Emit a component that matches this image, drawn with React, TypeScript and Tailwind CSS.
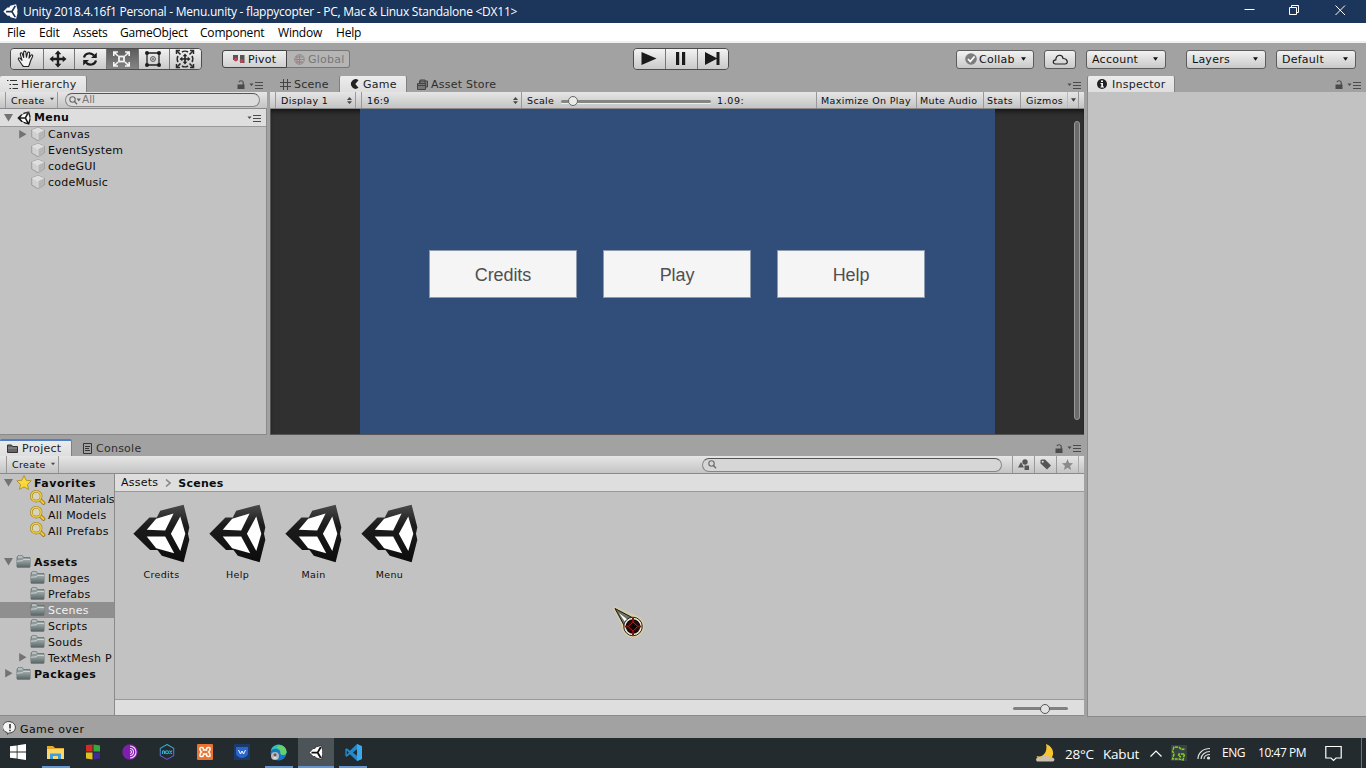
import React from "react";

type Kids = { children?: React.ReactNode; className?: string };

const UI = "font-['DejaVu_Sans',sans-serif]";
const SYS = "font-['Open_Sans','Noto_Sans',sans-serif]";
const BAR = "bg-linear-to-b from-[#e6e6e6] to-[#c4c4c4] border-b border-[#8a8a8a]";
const SMALL = "text-[9.5px] tracking-[0.35px] whitespace-nowrap";
const BTN = "bg-linear-to-b from-[#f2f2f2] to-[#c9c9c9] border border-[#5c5c5c]";

function Label({ children, className = "" }: Kids) {
  return <span className={`pt-[2px] ${className}`}>{children}</span>;
}

function UnityCube({ size, light = false }: { size: number; light?: boolean }) {
  return (
    <svg width={size} height={size} viewBox="0 0 172 176" className="shrink-0">
      <defs>
        <linearGradient id="cube" x1="0" y1="0" x2="0" y2="1">
          <stop offset="0" stopColor="#4a4a4a" />
          <stop offset="0.35" stopColor="#1c1c1c" />
          <stop offset="1" stopColor="#0c0c0c" />
        </linearGradient>
      </defs>
      <path
        d="M2 89 50 40H72L82 20 152 2 169 69 165 89 169 107 152 174 87 154 74 137H52Z"
        fill={light ? "#fff" : "url(#cube)"}
      />
      {light ? (
        <path d="M34 89H102L142 22M102 89 142 154" fill="none" stroke="#1b355b" strokeWidth="20" />
      ) : (
        <path d="M42 77 70 44 122 28 97 79ZM42 97H97L124 147 70 132ZM142 37 157 89 142 140 114 89Z" fill="#fff" />
      )}
    </svg>
  );
}

function Caret({ className = "" }: { className?: string }) {
  return (
    <svg width="6" height="4" viewBox="0 0 6 4" className={`shrink-0 ${className}`}>
      <path d="M0 0H6L3 4Z" fill="currentColor" />
    </svg>
  );
}

function UpDown() {
  return (
    <svg width="5" height="7" viewBox="0 0 5 7" className="shrink-0">
      <path d="M0 3 2.5 0 5 3ZM0 4.300H5L2.500 7Z" fill="#444" />
    </svg>
  );
}

function PanelMenu() {
  return (
    <svg width="14" height="8" viewBox="0 0 14 8" className="shrink-0">
      <path d="M0.500 2.500H4.500L2.500 5Z" fill="#4a4a4a" />
      <path d="M6 1.500H14M6 4.500H14M6 7.500H14" stroke="#4a4a4a" strokeWidth="1" />
    </svg>
  );
}

function Lock() {
  return (
    <svg width="8" height="9" viewBox="0 0 8 9" className="shrink-0">
      <path d="M0.500 4.500H7.500V9H0.500Z" fill="#4a4a4a" />
      <path d="M2 2.200C2.500 0.200 6.200 0.200 6.200 2.500V5" fill="none" stroke="#4a4a4a" strokeWidth="1.200" />
    </svg>
  );
}

function Fold({ open = false }: { open?: boolean }) {
  return (
    <svg width="9" height="9" viewBox="0 0 9 9" className="-mt-px shrink-0">
      <path d={open ? "M0 1H9L4.500 8.500Z" : "M1.200 0V8.500L8.500 4.200Z"} fill="#737373" />
    </svg>
  );
}

function PrefabCube() {
  return (
    <svg width="14" height="16" viewBox="0 0 14 16" className="-mt-[2px] shrink-0">
      <path d="M7 1.500 13.300 4V11L7 14.700 0.700 11V4Z" fill="#d0d0d0" stroke="#8f8f8f" strokeWidth="0.800" />
      <path d="M7 1.500 13 4 7 7 1 4Z" fill="#dedede" />
      <path d="M7 7 13 4V11L7 14.500Z" fill="#b6b6b6" />
      <path d="M1 4 7 7 13 4M7 7V14" stroke="#e8e8e8" strokeWidth="0.600" fill="none" />
    </svg>
  );
}

function Folder() {
  return (
    <svg width="15" height="13" viewBox="0 0 15 13" className="-mt-px shrink-0">
      <defs>
        <linearGradient id="fold" x1="0" y1="0" x2="0" y2="1">
          <stop offset="0" stopColor="#a5afaf" />
          <stop offset="1" stopColor="#566365" />
        </linearGradient>
      </defs>
      <path d="M1 12V2.500L2 0.800H6.500L7.500 2.500H14V12Z" fill="#8f9a9b" stroke="#5c6768" strokeWidth="0.700" />
      <path d="M2 2H6.500" stroke="#e0e6e6" />
      <path d="M0.500 6 6 5.500 7.500 4H14.500L14 12.500H1Z" fill="url(#fold)" />
      <path d="M1 6.200 6 5.800 7.500 4.400H14" stroke="#d9e0e0" strokeWidth="0.800" fill="none" />
    </svg>
  );
}

function YellowLens() {
  return (
    <svg width="17" height="16" viewBox="0 0 17 16" className="shrink-0">
      <path d="M11 9.500 14.500 13" stroke="#8b6e16" strokeWidth="3.600" strokeLinecap="round" />
      <path d="M11 9.500 14.500 13" stroke="#f2c92e" strokeWidth="2.200" strokeLinecap="round" />
      <circle cx="7.200" cy="6.200" r="4.900" fill="#d9d5bd" stroke="#9a7d25" strokeWidth="2.600" />
      <circle cx="7.200" cy="6.200" r="4.900" fill="none" stroke="#f0cf45" strokeWidth="1.500" />
    </svg>
  );
}

function Lens({ caret = false }: { caret?: boolean }) {
  return (
    <svg width={caret ? 13 : 9} height="9" viewBox={caret ? "0 0 13 9" : "0 0 9 9"} className="shrink-0">
      <circle cx="3.500" cy="3.500" r="2.700" fill="none" stroke="#6a6a6a" strokeWidth="1.100" />
      <path d="M5.500 5.500 8 8.300" stroke="#6a6a6a" strokeWidth="1.400" />
      {caret && <path d="M7.500 2.500H12L9.800 5.500Z" fill="#6a6a6a" />}
    </svg>
  );
}

const toolIcons: React.ReactNode[] = [
  <svg key="hand" width="18" height="18" viewBox="0 0 18 18" fill="#f4f4f4" stroke="#222" strokeWidth="1.100" strokeLinejoin="round">
    <path d="M5.500 15.500 1.500 9.500C0.800 8.200 2.400 7.300 3.500 8.600L5 10.300 3.300 4.300C3 2.700 4.900 2.200 5.300 3.700L6.700 7.500 6.600 2.300C6.700 0.700 8.700 0.700 8.900 2.300L9.400 7.300 10.600 2.900C11.100 1.500 12.800 2 12.700 3.500L12 8.200 13.900 5.300C14.800 4.200 16.200 5.200 15.600 6.500L13.500 11C13 13 12.500 15 11.500 16.500H6.500Z" />
  </svg>,
  <svg key="move" width="18" height="18" viewBox="0 0 18 18" fill="#1d1d1d">
    <path d="M9 0.500 12.300 4.300H10.200V7.800H13.700V5.700L17.500 9 13.700 12.300V10.200H10.200V13.700H12.300L9 17.500 5.700 13.700H7.800V10.200H4.300V12.300L0.500 9 4.300 5.700V7.800H7.800V4.300H5.700Z" />
  </svg>,
  <svg key="rot" width="18" height="18" viewBox="0 0 18 18" fill="none" stroke="#1d1d1d" strokeWidth="2.200">
    <path d="M3 7.500C4 3 10 2 13 5.500M15 10.500C14 15 8 16 5 12.500" />
    <path d="M15.800 2.500V8H10ZM2.200 15.500V10H8Z" fill="#1d1d1d" stroke="none" />
  </svg>,
  <svg key="scale" width="19" height="18" viewBox="0 0 19 18" fill="none" stroke="#f4f4f4" strokeWidth="1.600">
    <path d="M1.800 6V2H6M2 2 6 6M13 2H17.200V6M17 2 13 6M1.800 12V16H6M2 16 6 12M13 16H17.200V12M17 16 13 12" />
    <rect x="7" y="6.500" width="5" height="5" fill="#777" strokeWidth="1.800" />
  </svg>,
  <svg key="rect" width="18" height="18" viewBox="0 0 18 18" fill="#1d1d1d">
    <path d="M3 3H15V15H3Z" fill="none" stroke="#222" strokeWidth="1.300" />
    <circle cx="3" cy="3" r="2" /><circle cx="15" cy="3" r="2" /><circle cx="3" cy="15" r="2" /><circle cx="15" cy="15" r="2" />
    <circle cx="9" cy="9" r="2.400" fill="none" stroke="#444" strokeWidth="0.900" /><circle cx="9" cy="9" r="0.800" />
  </svg>,
  <svg key="multi" width="20" height="20" viewBox="0 0 20 20" fill="none" stroke="#2a2a2a">
    <path d="M1.500 5V1.500H5M15 1.500H18.500V5M1.500 15V18.500H5M15 18.500H18.500V15" strokeWidth="1.500" />
    <path d="M7 3C8.500 2 11.500 2 13 3M17 7C18 8.500 18 11.500 17 13M13 17C11.500 18 8.500 18 7 17M3 13C2 11.500 2 8.500 3 7M2 2 5.500 5.500M18 2 14.500 5.500M2 18 5.500 14.500M18 18 14.500 14.500" strokeWidth="1.600" />
    <path d="M10 4.500 12.300 7.300H10.800V9.200H12.700V7.700L15.500 10 12.700 12.300V10.800H10.800V12.700H12.300L10 15.500 7.700 12.700H9.200V10.800H7.300V12.300L4.500 10 7.300 7.700V9.200H9.200V7.300H7.700Z" fill="#222" stroke="none" />
  </svg>,
];

function DropButton({ label, className = "" }: { label: string; className?: string }) {
  return (
    <div className={`flex h-[19px] w-20 items-center justify-between rounded-[3px] pl-[5px] pr-[7px] text-[#111] ${BTN} ${className}`}>
      <Label>{label}</Label>
      <Caret className="w-[5px]" />
    </div>
  );
}

function TitleBar() {
  return (
    <div className={`flex h-[23px] items-center bg-[#1b355b] text-white ${SYS}`}>
      <div className="w-[23px] pl-[3px]"><UnityCube size={15} light /></div>
      <span className="grow pt-px text-[12px] tracking-[-0.245px] whitespace-nowrap">
        Unity 2018.4.16f1 Personal - Menu.unity - flappycopter - PC, Mac &amp; Linux Standalone &lt;DX11&gt;
      </span>
      <svg width="102" height="12" viewBox="0 0 102 12" fill="none" stroke="#fff" className="mr-[20px] -mt-[3px]">
        <path d="M0.500 5.500H10.500M45.500 3.500H52.500V10.500H45.500ZM47.500 3V1.500H54.500V8.500H53M91.500 1.500 101 11M101 1.500 91.500 11" />
      </svg>
    </div>
  );
}

function MenuBar() {
  const items: [string, string][] = [
    ["File", "w-8"], ["Edit", "w-[34px]"], ["Assets", "w-[47px]"], ["GameObject", "w-20"],
    ["Component", "w-[78px]"], ["Window", "w-[58px]"], ["Help", "w-10"],
  ];
  return (
    <div className={`flex h-5 items-center border-b-2 border-[#f0f0f0] bg-white pt-[2px] pl-[7px] text-[12px] tracking-[-0.200px] text-black ${SYS}`}>
      {items.map(([t, w]) => <span key={t} className={w}>{t}</span>)}
    </div>
  );
}

function Toolbar() {
  return (
    <div className="flex h-[33px] items-center pl-[10px] text-[11px] tracking-[0.250px]">
      <div className="-mt-[2px] flex h-[22px] w-[192px] overflow-hidden rounded-[4px] border border-[#4c4c4c]">
        {toolIcons.map((icon, i) => (
          <div key={i} className={`flex w-8 items-center justify-center pr-[2px] ${i ? "border-l border-[#777]" : ""} ${i === 3 ? "bg-linear-to-b from-[#5c5c5c] to-[#858585]" : "bg-linear-to-b from-[#f2f2f2] to-[#c9c9c9]"}`}>{icon}</div>
        ))}
      </div>
      <div className="-mt-px ml-5 flex h-[18px] w-[65px] items-center rounded-l-[3px] border border-[#444] bg-linear-to-b from-[#efefef] to-[#d0d0d0] pl-[10px] text-[#111]">
        <svg width="12" height="10" viewBox="0 0 12 10" className="mr-[3px]">
          <path d="M0 1H5V6H0ZM7 1H11.500V9H7Z" fill="#555" /><circle cx="2.800" cy="5.500" r="2" fill="#b64956" /><circle cx="8.600" cy="7" r="2" fill="#b64956" />
        </svg>
        <Label>Pivot</Label>
      </div>
      <div className="-mt-px flex h-[18px] w-[63px] items-center rounded-r-[3px] border border-l-0 border-[#777] bg-[#b5b5b5] pl-[7px] text-[#777]">
        <svg width="11" height="11" viewBox="0 0 11 11" className="mr-[3px]" fill="none" stroke="#888">
          <circle cx="5.500" cy="5.500" r="4.800" /><path d="M5.500 1V10M1 5.500H10M2 3H9M2 8H9" /><path d="M3 1.500V8H8" stroke="#b77" />
        </svg>
        <Label>Global</Label>
      </div>
      <div className="-mt-[2px] ml-[283px] flex h-[22px] w-[96px] overflow-hidden rounded-[4px] border border-[#4c4c4c]">
        {["M0.500 1 15.500 7.500 0.500 14Z", "M4 1H7.200V14H4ZM10 1H13.200V14H10Z", "M1 1 12.500 7 12.500 1H15.500V14H12.500V8L1 14Z"].map((d, i) => (
          <div key={i} className={`flex w-8 items-center justify-center bg-linear-to-b from-[#f2f2f2] to-[#c9c9c9] pr-[2px] ${i ? "border-l border-[#777]" : ""}`}>
            <svg width="16" height="15" viewBox="0 0 16 15"><path d={d} fill="#1a1a1a" /></svg>
          </div>
        ))}
      </div>
      <div className={`-mt-px ml-[227px] flex h-[19px] w-[78px] items-center rounded-[3px] pl-2 text-[#111] ${BTN}`}>
        <svg width="12" height="12" viewBox="0 0 12 12"><circle cx="6" cy="6" r="5.800" fill="#7d7d7d" /><path d="M3 6 5.300 8.500 9.500 3.500" stroke="#fff" strokeWidth="1.800" fill="none" /></svg>
        <Label className="ml-[2px] w-[42px]">Collab</Label>
        <Caret className="w-[5px]" />
      </div>
      <div className={`-mt-px ml-[10px] flex h-[19px] w-8 items-center justify-center rounded-[3px] ${BTN}`}>
        <svg width="16" height="11" viewBox="0 0 16 11" fill="none" stroke="#222" strokeWidth="1.200"><path d="M3.500 10C0.500 10 0.500 6 3.800 5.800 4 0 10.500 0 11 4.500 16 4.500 16.500 10 13 10Z" /></svg>
      </div>
      <DropButton label="Account" className="-mt-px ml-[10px]" />
      <DropButton label="Layers" className="-mt-px ml-5" />
      <DropButton label="Default" className="-mt-px ml-[10px]" />
    </div>
  );
}

function Tab({ active = false, focus = false, className = "", icon, children }: Kids & { active?: boolean; focus?: boolean; icon: React.ReactNode }) {
  return (
    <div className={`flex h-4 items-center whitespace-nowrap text-[11px] tracking-[0.250px] ${active ? "rounded-t-[2px] border-r border-[#808080] bg-linear-to-b from-[#ececec] to-[#dedede] text-[#222]" : "text-[#2e2e2e]"} ${focus ? "border-t-2 border-t-[#4f7fc4]" : ""} ${className}`}>
      {icon}
      <Label>{children}</Label>
    </div>
  );
}

function CreateButton() {
  return (
    <div className={`flex h-full w-[53px] items-center justify-between border-x border-[#999] pr-[3px] pl-[5px] ${SMALL}`}>
      <Label>Create</Label><Caret className="-mt-0.5 w-1 text-[#444]" />
    </div>
  );
}

function Hierarchy() {
  const rows = ["Canvas", "EventSystem", "codeGUI", "codeMusic"];
  return (
    <section className="flex w-[267px] flex-col">
      <div className="flex h-4 items-center">
        <Tab active className="w-[87px] pl-[7px]" icon={<svg width="11" height="9" viewBox="0 0 11 9" className="mr-[3px]"><path d="M0 .5H1.500M3 .5H10M2.500 4.500H4M5.500 4.500H11M2.500 8.500H4M5.500 8.500H11" stroke="#333" /></svg>}>
          Hierarchy
        </Tab>
        <div className="ml-auto flex items-center gap-1 pt-px pr-[4px]"><Lock /><PanelMenu /></div>
      </div>
      <div className={`flex h-[17px] items-center pl-[5px] ${BAR}`}>
        <CreateButton />
        <div className="ml-[7px] flex h-[14px] w-[195px] items-center rounded-full border border-[#868686] border-t-[#555] bg-[#dcdcdc] pl-[3px] text-[10.500px] text-[#777]"><Lens caret /><span>All</span></div>
      </div>
      <div className="flex grow flex-col border-r border-b border-[#8a8a8a] bg-[#c2c2c2] text-[11px] tracking-[0.250px]">
        <div className="flex h-[18px] items-center border-b border-[#999] bg-[#dedede] pl-1 font-bold">
          <Fold open /><div className="ml-[4px] w-[17px]"><UnityCube size={14} /></div><Label>Menu</Label>
          <div className="mr-[5px] ml-auto"><PanelMenu /></div>
        </div>
        {rows.map((r, i) => (
          <div key={r} className="flex h-4 items-center pl-[18px]">
            <div className="w-[13px]">{i === 0 && <Fold />}</div><PrefabCube /><span className="ml-[3px]">{r}</span>
          </div>
        ))}
      </div>
    </section>
  );
}

function GameView() {
  return (
    <section className="mr-px ml-[3px] flex w-[814px] flex-col">
      <div className="flex h-4 items-center">
        <Tab className="w-[69px] pl-[10px]" icon={<svg width="11" height="11" viewBox="0 0 11 11" className="mr-[3px]"><path d="M3.500 0V11M7.500 0V11M0 3.500H11M0 7.500H11" stroke="#444" /></svg>}>
          Scene
        </Tab>
        <Tab active className="w-[68px] border-l pl-[10px]" icon={<svg width="9" height="10" viewBox="0 0 9 10" className="mr-[4px]"><path d="M8.500 1.200 5.300 5 8.500 8.800A4.700 4.700 0 1 1 8.500 1.200Z" fill="#222" /></svg>}>
          Game
        </Tab>
        <Tab className="pl-[10px]" icon={<svg width="11" height="11" viewBox="0 0 11 11" className="mr-[3px]" fill="#777" stroke="#444"><path d="M2.500 4V2H10.500V8H9" /><path d="M0.500 4.500H8.500V10.500H0.500ZM0.500 6.500H8.500" /><path d="M3 4V1H8V4" fill="none" /></svg>}>
          Asset Store
        </Tab>
        <div className="ml-auto pt-px pr-[3px]"><PanelMenu /></div>
      </div>
      <div className={`flex h-[17px] items-center pl-[5px] ${BAR} ${SMALL}`}>
        <div className="flex h-full w-[81px] items-center justify-between border-x border-[#999] pr-[3px] pl-[5px]"><Label>Display 1</Label><UpDown /></div>
        <div className="ml-[5px] flex h-full w-[161px] items-center justify-between border-x border-[#999] pr-[3px] pl-[5px]"><Label>16:9</Label><UpDown /></div>
        <Label className="ml-[5px] w-[34px]">Scale</Label>
        <div className="relative mt-[3px] h-[3px] w-[150px] rounded-full bg-[#858585] shadow-[0_1px_0_#eee]">
          <div className="absolute -top-[4px] left-[7px] size-[10px] rounded-full border border-[#666] bg-[#eaeaea]" />
        </div>
        <Label className="ml-[6px] tracking-[0.600px]">1.09:</Label>
        <div className="ml-auto flex h-full w-[100px] items-center border-l border-[#999] pl-[4px]"><Label>Maximize On Play</Label></div>
        <div className="flex h-full w-[67px] items-center border-l border-[#999] pl-[3px]"><Label>Mute Audio</Label></div>
        <div className="flex h-full w-[37px] items-center border-l border-[#999] pl-[3px]"><Label>Stats</Label></div>
        <div className="mr-[5px] flex h-full w-[59px] items-center border-x border-[#999] pl-[5px]">
          <Label className="w-[41px]">Gizmos</Label>
          <div className="flex h-full items-center border-l border-[#bbb] pl-[3px]"><Caret className="w-[5px] text-[#444]" /></div>
        </div>
      </div>
      <div className="flex h-[326px] border-b border-l border-[#555] bg-[#303030] shadow-[inset_0_4px_5px_-2px_#111]">
        <div className="ml-[89px] flex w-[635px] items-center justify-center gap-[26px] bg-[#314d79] pt-[5px] pr-px">
          {["Credits", "Play", "Help"].map((t) => (
            <div key={t} className="flex h-[48px] w-[148px] items-center justify-center border border-[#8d9aae] bg-[#f5f5f5] pt-[2px] font-['Liberation_Sans',sans-serif] text-[18px] tracking-[-0.100px] text-[#505050]">{t}</div>
          ))}
        </div>
        <div className="mt-3 ml-[79px] h-[299px] w-[6px] rounded-full border border-[#999] bg-[#6b6b6b]" />
      </div>
    </section>
  );
}

function TreeRow({ label, icon, level = 0, fold, selected = false, bold = false, tight = false }: { label: string; icon: React.ReactNode; level?: number; fold?: "open" | "closed"; selected?: boolean; bold?: boolean; tight?: boolean }) {
  return (
    <div className={`flex h-4 items-center whitespace-nowrap ${level ? "pl-[18px]" : "pl-1"} ${selected ? "bg-[#8f8f8f] text-[#f2f2f2]" : ""} ${bold ? "font-bold tracking-[0.500px]" : tight ? "tracking-[-0.080px]" : "tracking-[0.250px]"}`}>
      <div className="w-3 shrink-0">{fold && <Fold open={fold === "open"} />}</div>
      <div className="flex w-[18px] shrink-0">{icon}</div>
      <Label>{label}</Label>
    </div>
  );
}

function ToolCell({ children }: Kids) {
  return <div className="flex h-full w-[22px] items-center justify-center border-l border-[#999]">{children}</div>;
}

function Project() {
  return (
    <section className="flex h-[281px] w-[1084px] flex-col pt-[4px]">
      <div className="flex h-[17px] items-center">
        <Tab active focus className="h-[17px] w-[72px] pl-[7px]" icon={<svg width="11" height="9" viewBox="0 0 11 9" className="mr-[4px]"><path d="M.5 8.500V1H4.500L5.500 2.500H10.500V8.500Z" fill="#666" stroke="#333" /><path d="M1 4H10" stroke="#999" /></svg>}>
          Project
        </Tab>
        <Tab className="h-[17px] pt-px pl-[11px]" icon={<svg width="9" height="11" viewBox="0 0 9 11" className="mr-[4px]" stroke="#333" fill="none"><path d="M.5 .5H8.500V10.500H.5ZM2 3.500H7M2 5.500H6M2 7.500H7" /></svg>}>
          Console
        </Tab>
        <div className="ml-auto flex items-center gap-1 pt-px pr-[3px]"><Lock /><PanelMenu /></div>
      </div>
      <div className={`flex h-[18px] items-center pl-[6px] ${BAR}`}>
        <CreateButton />
        <div className="ml-auto flex h-[14px] w-[300px] items-center rounded-full border border-[#868686] border-t-[#555] bg-[#d6d6d6] pl-[5px]"><Lens /></div>
        <div className="mr-[5px] ml-[10px] flex h-full border-r border-[#aaa]">
          <ToolCell><svg width="11" height="11" viewBox="0 0 11 11" fill="#555"><circle cx="7" cy="3" r="2.700" /><path d="M0 8.500 3 3 6 8.500ZM6.500 6.500H11V11H6.500Z" /></svg></ToolCell>
          <ToolCell><svg width="11" height="11" viewBox="0 0 11 11"><path d="M0.500 1.500 1.500 .5H5L11 6.500 7 10.500 0.500 4.500Z" fill="#555" /><circle cx="2.700" cy="2.700" r="1" fill="#ddd" /></svg></ToolCell>
          <ToolCell><svg width="11" height="11" viewBox="0 0 24 24"><path d="M12 0 15.500 8.500 24 9 17.500 15 20 24 12 19 4 24 6.500 15 0 9 8.500 8.500Z" fill="#8a8a8a" /></svg></ToolCell>
        </div>
      </div>
      <div className="flex h-[242px]">
        <aside className="flex w-[115px] shrink-0 flex-col overflow-hidden border-r border-b border-[#8a8a8a] bg-[#c2c2c2] pt-px text-[11px]">
          <TreeRow label="Favorites" bold fold="open" icon={<svg width="16" height="15" viewBox="0 0 24 24" className="-mt-px shrink-0"><path d="M12 1 15.500 8.500 23.500 9.300 17.500 15 19.300 23 12 19 4.700 23 6.500 15 .5 9.300 8.500 8.500Z" fill="#fbd93a" stroke="#a8871d" strokeWidth="1.300" /></svg>} />
          {["All Materials", "All Models", "All Prefabs"].map((t) => <TreeRow key={t} label={t} level={1} tight={t === "All Materials"} icon={<span className="-mt-[2px] -ml-px"><YellowLens /></span>} />)}
          <div className="h-[15px] shrink-0" />
          <TreeRow label="Assets" bold fold="open" icon={<Folder />} />
          {["Images", "Prefabs", "Scenes", "Scripts", "Souds"].map((t) => <TreeRow key={t} label={t} level={1} selected={t === "Scenes"} icon={<Folder />} />)}
          <TreeRow label="TextMesh P" level={1} fold="closed" icon={<Folder />} />
          <TreeRow label="Packages" bold fold="closed" icon={<Folder />} />
        </aside>
        <div className="flex w-[969px] flex-col border-b border-[#8a8a8a] bg-[#c2c2c2]">
          <div className="flex h-[18px] items-center border-b border-[#999] bg-[#dedede] pl-[6px] text-[11px] tracking-[0.250px]">
            <Label>Assets</Label>
            <svg width="6" height="8" viewBox="0 0 6 8" className="mx-[7px]" fill="none" stroke="#888" strokeWidth="1.600"><path d="M1 .5 5 4 1 7.500" /></svg>
            <Label className="pt-[3px] font-bold">Scenes</Label>
          </div>
          <div className="flex grow pt-[12px] pl-[8px]">
            {["Credits", "Help", "Main", "Menu"].map((t) => (
              <div key={t} className={`flex w-[76px] flex-col items-center ${SMALL}`}><UnityCube size={59} /><span className="mt-[5px] ml-px">{t}</span></div>
            ))}
          </div>
          <div className="flex h-[16px] items-center justify-end border-t border-[#999] bg-[#dedede] pt-px pr-4">
            <div className="relative h-[3px] w-[55px] rounded-full bg-[#808080]">
              <div className="absolute -top-[3px] left-[27px] size-[10px] rounded-full border border-[#555] bg-[#e2e2e2]" />
            </div>
          </div>
        </div>
      </div>
    </section>
  );
}

function Inspector() {
  return (
    <section className="ml-[2px] flex w-[279px] flex-col">
      <div className="flex h-4 items-center">
        <Tab active className="w-[88px] border-l pl-[9px]" icon={<svg width="10" height="10" viewBox="0 0 10 10" className="mr-[5px]"><circle cx="5" cy="5" r="5" fill="#222" /><path d="M4 1.500H6V3H4ZM3.500 4H6V7.500H7V8.500H3.500V7.500H4.300V5H3.500Z" fill="#fff" /></svg>}>
          Inspector
        </Tab>
        <div className="ml-auto flex items-center gap-1 pt-px pr-[5px]"><Lock /><PanelMenu /></div>
      </div>
      <div className="grow border-b border-l border-[#8a8a8a] bg-[#c2c2c2]" />
    </section>
  );
}

const taskIcons: { key: string; state?: "open" | "active"; icon: React.ReactNode }[] = [
  { key: "start", icon: <svg width="16" height="16" viewBox="0 0 16 16" fill="#fff"><path d="M0 2.300 6.700 1.400V7.600H0ZM7.500 1.200 16 0V7.600H7.500ZM0 8.400H6.700V14.600L0 13.700ZM7.500 8.400H16V16L7.500 14.800Z" /></svg> },
  { key: "files", state: "open", icon: <svg width="17" height="15" viewBox="0 0 17 15"><path d="M0 1H6L8 3H17V14H0Z" fill="#e9a928" /><path d="M0 4H17V14H0Z" fill="#fcd668" /><path d="M3 14V8.500H14V14H11V11H6V14Z" fill="#3f9fdc" /></svg> },
  { key: "blocks", icon: <svg width="16" height="16" viewBox="0 0 16 16"><path d="M1 1 7.500 .5V7.500H1Z" fill="#d32c23" /><path d="M8.500 .5 15 1.500V7.500H8.500Z" fill="#32ac36" /><path d="M1 8.500H7.500V15.500L1 14.500Z" fill="#e2c01f" /><path d="M8.500 8.500H15V14.500L8.500 15.500Z" fill="#40289d" /></svg> },
  { key: "tor", icon: <svg width="16" height="16" viewBox="0 0 16 16" fill="none"><circle cx="8" cy="8" r="7.700" fill="#7e1fab" /><path d="M8 2A6 6 0 0 1 8 14M8 4.500A3.500 3.500 0 0 1 8 11.500M8 6.500A1.500 1.500 0 0 1 8 9.500" stroke="#f3d6ff" strokeWidth="1.100" /></svg> },
  { key: "nox", icon: <svg width="16" height="16" viewBox="0 0 16 16" fill="none" strokeWidth="1.100"><defs><linearGradient id="nox" x2="0" y2="1"><stop stopColor="#28b8cf" /><stop offset="1" stopColor="#6d45bd" /></linearGradient></defs><path d="M8 .6 14.700 4.300V11.700L8 15.400 1.300 11.700V4.300Z" stroke="url(#nox)" /><path d="M3.500 10V7.500Q4.500 6 5.500 7.500V10M10.500 6.500 13 10M13 6.500 10.500 10" stroke="#29b7d5" /><circle cx="8" cy="8.300" r="1.500" stroke="#29b7d5" /></svg> },
  { key: "xampp", icon: <svg width="16" height="16" viewBox="0 0 16 16"><rect width="16" height="16" rx="1" fill="#ea7330" /><path d="M5 3.500H4Q2.500 3.500 3 5.500 3.300 7 4.500 8 3.300 9 3 10.500 2.500 12.500 4 12.500H5Q6.500 12.500 6.500 10.500V10H9.500V10.500Q9.500 12.500 11 12.500H12Q13.500 12.500 13 10.500 12.700 9 11.500 8 12.700 7 13 5.500 13.500 3.500 12 3.500H11Q9.500 3.500 9.500 5.500V6H6.500V5.500Q6.500 3.500 5 3.500Z" stroke="#fff" strokeWidth="1.500" fill="none" /></svg> },
  { key: "wps", icon: <svg width="16" height="16" viewBox="0 0 16 16"><rect width="16" height="16" fill="#1a3a69" /><path d="M2 3H14V10Q13 13 8 14 3 13 2 10Z" fill="#2b66cf" /><path d="M4.500 6 6.500 10 8 7 9.500 10 11.500 6" stroke="#fff" strokeWidth="1" fill="none" /></svg> },
  { key: "edge", state: "open", icon: <svg width="17" height="17" viewBox="0 0 17 17"><circle cx="8.500" cy="8.500" r="8" fill="#1577c6" /><path d="M1 7C2-1 15-2 16.500 8 16 12 10 11.500 10.500 9 10.500 5 4 3 1 7Z" fill="#35c1b1" /><path d="M9 1C14 1 17 5 16.500 8.500 16 12 10 11.500 10.500 9 11 6 9 4 6 4Z" fill="#66d06a" /><circle cx="5" cy="12" r="4" fill="#b8b8b8" /><circle cx="5" cy="10.800" r="1.500" fill="#6e5850" /><path d="M2.500 14.500Q5 11.500 7.500 14.500Z" fill="#eee" /></svg> },
  { key: "unity", state: "active", icon: <svg width="14" height="15" viewBox="0 0 172 176"><path d="M2 89 50 40H72L82 20 152 2 169 69 165 89 169 107 152 174 87 154 74 137H52Z" fill="#fff" stroke="#111" strokeWidth="8" /><path d="M30 89H105L145 20M105 89 145 155" stroke="#111" strokeWidth="22" fill="none" /></svg> },
  { key: "code", state: "open", icon: <svg width="17" height="17" viewBox="0 0 24 24"><path d="M17 0 24 3V21L17 24 7 14.500 2.500 18 .5 17V7L2.500 6 7 9.500Z" fill="#2489ca" /><path d="M17.500 7V17L11 12ZM2.500 9V15L5.500 12Z" fill="#242b30" /><path d="M17 0 24 3V21L17 24Z" fill="#3ba7ec" /></svg> },
];

function Taskbar() {
  return (
    <div className={`flex h-[30px] items-stretch bg-[#232b2f] text-white ${SYS}`}>
      {taskIcons.map(({ key, icon, state }) => (
        <div key={key} className={`flex w-[37.200px] justify-center ${key === "start" ? "pr-[2px]" : ""}`}>
          <div className={`flex items-center justify-center border-b-2 ${state === "active" ? "w-9 bg-[#4d5458]" : "w-7"} ${state ? "border-[#6496d2]" : "border-transparent"}`}>{icon}</div>
        </div>
      ))}
      <div className="ml-auto flex items-center whitespace-nowrap">
        <svg width="21" height="19" viewBox="0 0 21 19" className="mr-[9px]"><path d="M11 0C20 3 21 15 11 17 7 17.500 3 15 1.500 12 8 14 13 8 11 0Z" fill="#f8c62c" /><path d="M2 17.500C-1 14 4 12 6 14 8 9.500 14 11 14 13.500 20 12 21 17.500 17 17.500Z" fill="#cdbfae" /></svg>
        <Label className="w-[38px] text-[13.500px] tracking-[-0.200px]">28°C</Label>
        <Label className="w-[47px] text-[13.500px] tracking-[-0.200px]">Kabut</Label>
        <svg width="12" height="7" viewBox="0 0 12 7" className="mr-[9px]" fill="none" stroke="#fff" strokeWidth="1.200"><path d="M.5 6.500 6 1 11.500 6.500" /></svg>
        <svg width="16" height="16" viewBox="0 0 16 16" className="mr-[10px]" fill="none"><rect width="16" height="16" fill="#394044" /><path d="M13.500 4 10 4.500 8.500 2.500 3 2 1.500 6 3 9 1.500 14H8L12 15 13.500 9H8L7.500 11 10 12" stroke="#80d51e" strokeWidth="1.500" strokeDasharray="3 0.800" /></svg>
        <svg width="14" height="13" viewBox="0 0 14 13" className="mr-[11px]" fill="none" stroke="#ddd" strokeWidth="1.200"><path d="M1 12C1 6 6 1.500 13 1.500M4 12C4 8 8 4.500 13 4.500M7 12C7 9.500 9.500 7.500 13 7.500" /><circle cx="11.500" cy="11" r="1" fill="#fff" /></svg>
        <span className="w-9 text-[12px] tracking-[-0.500px]">ENG</span>
        <span className="w-[67px] text-[12px] tracking-[-0.450px]">10:47 PM</span>
        <svg width="17" height="17" viewBox="0 0 17 17" className="mr-[19px]" fill="none" stroke="#fff" strokeWidth="1.200"><path d="M.8 1.500H16.200V13H11L8.500 15.500 6 13H.8Z" /></svg>
        <div className="mr-1 h-[30px] w-px bg-[#69757b]" />
      </div>
    </div>
  );
}

function CrosshairPointer() {
  return (
    <svg width="34" height="34" viewBox="0 0 34 34" className="absolute top-[605px] left-[612px]">
      <path d="M2.500 3 24 12 13 23Z" fill="#ead796" stroke="#ead796" strokeWidth="3" strokeLinejoin="round" opacity="0.500" />
      <circle cx="21" cy="21.500" r="11" fill="#ead796" opacity="0.700" />
      <path d="M3 3.500 23 14 13 22Z" fill="#6d7163" stroke="#1b1b17" />
      <path d="M7 8 16 15 13 17Z" fill="#fff" />
      <circle cx="21" cy="21.500" r="9.300" fill="#eee9d6" stroke="#222" />
      <circle cx="21" cy="21.500" r="6.500" fill="#310b0b" stroke="#170707" strokeWidth="1.500" />
      <path d="M21 13V30M12.500 21.500H29.500" stroke="#771313" strokeWidth="2" />
      <path d="M21 17 25.500 21.500 21 26 16.500 21.500Z" stroke="#9a2020" fill="#150303" />
    </svg>
  );
}

export default function App() {
  return (
    <div className={`relative flex h-[768px] w-[1366px] flex-col overflow-hidden bg-[#a2a2a2] text-[#0c0c0c] ${UI}`}>
      <TitleBar />
      <MenuBar />
      <Toolbar />
      <main className="flex h-[641px]">
        <div className="flex w-[1085px] flex-col">
          <div className="flex h-[359px]"><Hierarchy /><GameView /></div>
          <Project />
        </div>
        <Inspector />
      </main>
      <footer className="flex h-[21px] items-center pl-[3px] text-[11px] tracking-[0.400px]">
        <svg width="14" height="14" viewBox="0 0 14 14" className="mr-[3px]"><path d="M7 .7A6 5.500 0 1 1 5.500 12L4.500 13.500 4.200 11.500A6 5.500 0 0 1 7 .7Z" fill="#f5f5f5" stroke="#444" /><path d="M7 3V7.500M7 8.700V10.200" stroke="#333" strokeWidth="1.600" /></svg>
        <Label className="mt-[3px]">Game over</Label>
      </footer>
      <Taskbar />
      <CrosshairPointer />
    </div>
  );
}
